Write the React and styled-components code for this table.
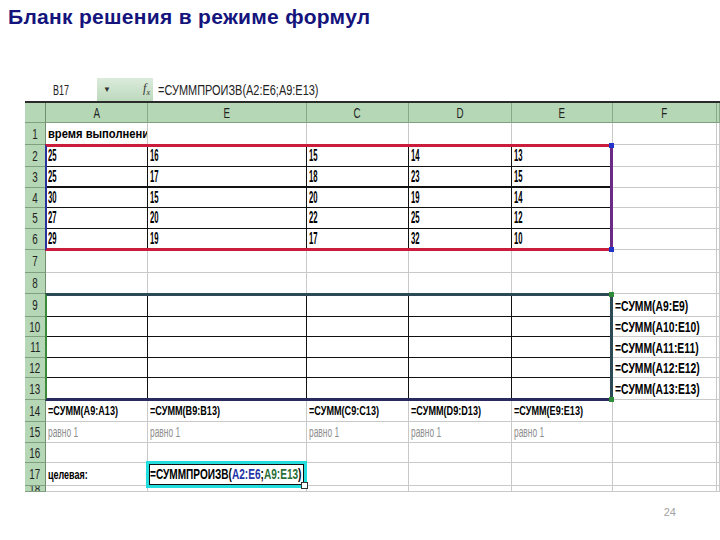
import React from 'react'
import styled, { createGlobalStyle } from 'styled-components'

const GlobalStyle = createGlobalStyle`
  html, body {
    margin: 0;
    padding: 0;
    background: #fff;
  }
  body {
    font-family: 'Liberation Sans', Arial, sans-serif;
  }
`

const COLS = [21, 102, 159, 102, 103, 101, 104, 3]
const ROWS = [22, 22, 21, 20, 21, 21, 23, 21, 23, 20, 21, 20, 22, 22, 21, 20, 23, 6]
const LETTERS = ['', 'A', 'E', 'C', 'D', 'E', 'F', '']
const REF_LETTERS = ['A', 'B', 'C', 'D', 'E']

const values = [
  [25, 16, 15, 14, 13],
  [25, 17, 18, 23, 15],
  [30, 15, 20, 19, 14],
  [27, 20, 22, 25, 12],
  [29, 19, 17, 32, 10],
]

const Slide = styled.div`
  width: 720px;
  height: 540px;
  display: flex;
  flex-direction: column;
  overflow: hidden;
`

const Title = styled.h1`
  margin: 5px 0 0 8px;
  font-size: 21px;
  line-height: 24px;
  letter-spacing: 0.3px;
  font-weight: 700;
  color: #14147c;
`

const Sheet = styled.div`
  margin: 49px 0 0 25px;
  width: 695px;
  height: 414px;
  overflow: hidden;
  display: flex;
  flex-direction: column;
`

const FormulaBar = styled.div`
  display: flex;
  height: 23px;
`

const NameBox = styled.div`
  width: 72px;
  padding-left: 28px;
  box-sizing: border-box;
  display: flex;
  align-items: center;
`

const NameDrop = styled.div`
  width: 56px;
  box-sizing: border-box;
  padding: 0 3px 0 6px;
  display: flex;
  align-items: center;
  justify-content: space-between;
  background: linear-gradient(#dcebdc, #bcd9bc);
`

const Arrow = styled.span`
  font-size: 8px;
  color: #333;
`

const Fx = styled.span`
  font-family: 'Liberation Serif', serif;
  font-style: italic;
  font-size: 12px;
  color: #333;
  sub {
    font-size: 8px;
  }
`

const FormulaInput = styled.div`
  flex: 1;
  padding-left: 5px;
  display: flex;
  align-items: center;
`

const Grid = styled.div`
  display: grid;
  grid-template-columns: ${COLS.map(w => w + 'px').join(' ')};
  grid-template-rows: 20px ${ROWS.map(h => h + 'px').join(' ')};
  border-top: 2px solid #2a2a2a;
`

const Cell = styled.div`
  grid-row: ${p => p.$r};
  grid-column: ${p => p.$c};
  box-sizing: border-box;
  min-width: 0;
  overflow: hidden;
  white-space: nowrap;
  display: flex;
  align-items: center;
  padding-left: 2px;
  background: #fff;
  border-right: 1px solid ${p => (p.$dark ? '#111' : '#c9c9c9')};
  border-bottom: ${p => (p.$thick ? 2 : 1)}px solid ${p => (p.$dark ? '#111' : '#c9c9c9')};
`

const HeadCell = styled(Cell)`
  justify-content: center;
  padding-left: 0;
  background: #b5d7b5;
  border-right: 1px solid ${p => (p.$side ? '#6f8f6f' : '#8aa98a')};
  border-bottom: 1px solid #7f9f7f;
`

const Txt = styled.span`
  display: inline-block;
  font-size: ${p => p.$size || 13}px;
  font-weight: ${p => (p.$bold ? 700 : 400)};
  color: ${p => p.$color || '#000'};
  transform: scaleX(${p => p.$sx || 0.7});
  transform-origin: ${p => (p.$center ? 'center' : 'left')} center;
  white-space: nowrap;
`

const Ref = styled.span`
  color: ${p => p.$color};
`

const Range = styled.div`
  grid-row: ${p => p.$rows};
  grid-column: ${p => p.$cols};
  position: relative;
  z-index: 2;
  pointer-events: none;
  margin: ${p => p.$m || '-1px 0 -1px -1px'};
  border-style: solid;
  border-width: ${p => p.$w};
  border-color: ${p => p.$color};
  box-shadow: ${p => p.$shadow || 'none'};
`

const Handle = styled.span`
  position: absolute;
  right: -4px;
  ${p => (p.$top ? 'top: -4px;' : 'bottom: -4px;')}
  width: 5px;
  height: 5px;
  background: ${p => p.$color};
  border: ${p => (p.$outline ? '1px solid #333' : 'none')};
`

const Footer = styled.div`
  flex: 1;
  display: flex;
  justify-content: flex-end;
  align-items: flex-start;
  padding: 14px 44px 0 0;
  font-size: 11px;
  color: #a3a3a3;
`

const cellText = (r, c) => {
  if (r === 1 && c === 1) {
    return <Txt $bold $sx={0.86}>время выполнения</Txt>
  }
  if (r >= 2 && r <= 6 && c >= 1 && c <= 5) {
    return <Txt $bold $size={16} $sx={0.48}>{values[r - 2][c - 1]}</Txt>
  }
  if (r >= 9 && r <= 13 && c === 6) {
    return <Txt $bold $size={15} $sx={0.69}>{`=СУММ(A${r}:E${r})`}</Txt>
  }
  if (r === 14 && c >= 1 && c <= 5) {
    const L = REF_LETTERS[c - 1]
    return <Txt $bold $sx={0.7}>{`=СУММ(${L}9:${L}13)`}</Txt>
  }
  if (r === 15 && c >= 1 && c <= 5) {
    return <Txt $color="#8e8e8e" $size={14} $sx={0.6}>равно 1</Txt>
  }
  if (r === 17 && c === 1) {
    return <Txt $bold $sx={0.69}>целевая:</Txt>
  }
  if (r === 17 && c === 2) {
    return (
      <Txt $bold $size={14} $sx={0.72}>
        =СУММПРОИЗВ(<Ref $color="#1f35a8">A2:E6</Ref>;<Ref $color="#2a6e38">A9:E13</Ref>)
      </Txt>
    )
  }
  return null
}

const isDark = (r, c) => c >= 1 && c <= 5 && ((r >= 2 && r <= 6) || (r >= 9 && r <= 13))

export default function App() {
  const cells = []

  COLS.forEach((_, c) => {
    cells.push(
      <HeadCell key={`h-${c}`} $r={1} $c={c + 1} $side={c === 0}>
        {LETTERS[c] && <Txt $size={14} $sx={0.7} $center $color="#222">{LETTERS[c]}</Txt>}
      </HeadCell>
    )
  })

  ROWS.forEach((_, i) => {
    const r = i + 1
    cells.push(
      <HeadCell key={`r-${r}`} $r={r + 1} $c={1} $side>
        <Txt $size={14} $sx={0.7} $center $color="#222">{r}</Txt>
      </HeadCell>
    )
    for (let c = 1; c < COLS.length; c++) {
      cells.push(
        <Cell key={`${r}-${c}`} $r={r + 1} $c={c + 1} $dark={isDark(r, c)} $thick={r === 3 && c <= 5}>
          {cellText(r, c)}
        </Cell>
      )
    }
  })

  return (
    <>
      <GlobalStyle />
      <Slide>
        <Title>Бланк решения в режиме формул</Title>
        <Sheet>
          <FormulaBar>
            <NameBox>
              <Txt $size={15} $sx={0.6} $color="#222">B17</Txt>
            </NameBox>
            <NameDrop>
              <Arrow>▼</Arrow>
              <Fx>f<sub>x</sub></Fx>
            </NameDrop>
            <FormulaInput>
              <Txt $size={15} $sx={0.73} $color="#222">=СУММПРОИЗВ(A2:E6;A9:E13)</Txt>
            </FormulaInput>
          </FormulaBar>
          <Grid>
            {cells}
            <Range
              $rows="3 / 8"
              $cols="2 / 7"
              $w="3px 3px 3px 2px"
              $color="#c91d3b #6b2a86 #c91d3b #26359c"
            >
              <Handle $top $color="#2233cc" />
              <Handle $color="#2233cc" />
            </Range>
            <Range
              $rows="10 / 15"
              $cols="2 / 7"
              $w="3px 3px 3px 2px"
              $color="#2b4a55 #2b4a55 #2a2a5e #3a8a3a"
            >
              <Handle $top $color="#2f8a3a" />
              <Handle $color="#2f8a3a" />
            </Range>
            <Range
              $rows="18 / 19"
              $cols="3 / 4"
              $m="-2px 0 -2px -2px"
              $w="3px"
              $color="#22dede"
              $shadow="inset 0 0 0 1px #111"
            >
              <Handle $color="#fff" $outline />
            </Range>
          </Grid>
        </Sheet>
        <Footer>24</Footer>
      </Slide>
    </>
  )
}
